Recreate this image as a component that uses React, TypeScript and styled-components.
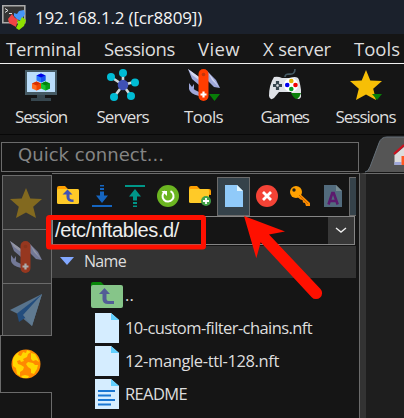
import React from "react";
import styled, { createGlobalStyle } from "styled-components";

const Global = createGlobalStyle`
  *{box-sizing:border-box}
  html,body{margin:0;background:#151515;overflow:hidden}
  svg{display:block;flex:none}
`;
const LINE = "#6b6b6b";

const Window = styled.div`
  position:relative;width:404px;height:418px;overflow:hidden;background:#151515;color:#dedede;
  font-family:"Open Sans","Noto Sans",sans-serif;display:flex;flex-direction:column;
`;
const Label = styled.span<{ $w: number; $size: number }>`
  display:block;flex:none;width:${p => p.$w}px;font-size:${p => p.$size}px;line-height:1.3;white-space:nowrap;
  text-align:left;
`;
/* Stretches or tightens a line of text to a fixed advance width */
function Fit({ w, size, children }: { w: number; size: number; children: string }) {
  const ref = React.useRef<HTMLSpanElement>(null);
  React.useLayoutEffect(() => {
    const el = ref.current!;
    const r = document.createRange();
    r.selectNodeContents(el);
    const natural = r.getBoundingClientRect().width;
    el.style.letterSpacing = `${(w - natural) / children.length}px`;
  }, [w, children]);
  return <Label ref={ref} $w={w} $size={size}>{children}</Label>;
}
const TitleBar = styled.header`
  height:34px;flex:none;background:#1b212c;display:flex;align-items:center;gap:8px;padding:0 0 0 2px;color:#f4f4f4;
`;
const TitleText = styled.div`padding-top:3px;`;
const Menu = styled.nav`
  height:30px;flex:none;border-bottom:1px solid #f0f0f0;display:flex;align-items:center;padding:1px 0 0 6px;gap:23px;
`;
const Toolbar = styled.div`
  height:71px;flex:none;border-bottom:1px solid #080808;display:grid;grid-template-columns:82px 81px 81px 81px 81px;
`;
const Tool = styled.div`display:flex;flex-direction:column;align-items:center;padding-top:5px;gap:5px;`;
const ConnectRow = styled.div`height:38px;flex:none;display:flex;align-items:flex-end;`;
const QuickBox = styled.div`
  width:358px;height:30px;margin:0 0 1px 1px;border:1px solid ${LINE};display:flex;align-items:center;padding:0 0 5px 16px;
  font-family:"DejaVu Sans",sans-serif;color:#858585;
`;
const Main = styled.div`flex:1;min-height:0;display:flex;`;
const SideTabs = styled.aside`width:52px;display:flex;flex-direction:column;padding-top:2px;`;
const SideTab = styled.div<{ $h: number }>`
  height:${p => p.$h}px;margin-left:2px;background:#333;border:1px solid ${LINE};border-bottom:0;
  display:flex;align-items:center;padding-left:7px;
`;
const ActiveTab = styled.div`
  height:58px;flex:none;border:1px solid ${LINE};border-right:0;display:flex;align-items:center;padding-left:9px;
`;
const SideRest = styled.div`flex:1;border-right:1px solid ${LINE};`;
const Panel = styled.section`width:308px;border-top:1px solid ${LINE};border-right:1px solid ${LINE};`;
const FileTools = styled.div`height:42px;display:flex;padding:3px 0 0 0;overflow:hidden;width:304px;`;
const FileTool = styled.div<{ $on?: boolean }>`
  width:33px;height:39px;flex:none;display:flex;align-items:center;justify-content:center;padding-bottom:2px;
  border:1px solid ${p => (p.$on ? LINE : "transparent")};background:${p => (p.$on ? "#35424a" : "transparent")};
`;
const PathBox = styled.div`
  width:303px;height:29px;border:1px solid #858585;display:flex;justify-content:space-between;align-items:center;
  padding-left:2px;font-family:"Liberation Sans",Arial,sans-serif;color:#eee;
`;
const PathText = styled.div`padding-bottom:1px;`;
const Drop = styled.div`width:26px;height:27px;background:#383838;display:flex;align-items:center;justify-content:center;`;
const Head = styled.div`
  margin-top:1px;width:304px;height:32px;background:#333;display:flex;align-items:center;padding:0 0 2px 8px;gap:10px;
`;
const FileRow = styled.div`height:33px;display:flex;align-items:center;padding-left:39px;gap:2px;`;
const FileName = styled.div`padding-top:1px;`;
const IconSlot = styled.div`width:32px;display:flex;justify-content:center;`;
const Terminal = styled.div`flex:1;border-left:6px solid #333;background:#1e1e1e;border-top:1px solid ${LINE};`;
const Overlay = styled.svg`position:absolute;left:0;top:0;pointer-events:none;`;

const STAR = "M16 1l4.3 10.6L32 12l-8.8 7.7L26 31l-10-5.5L6 31l2.8-11.3L0 12l11.7-.4z";

const Knife = ({ muted = false }: { muted?: boolean }) => (
  <svg width="32" height="32" viewBox="0 0 32 32" opacity={muted ? 0.6 : 1}>
    <path d="M0 0l11 8v8L4 10z" fill="#9fa8da" /><path d="M0 0l11 8v3L4 6z" fill="#d5d9ef" />
    <path d="M19 2l9 9 4 8-6-1-7-7z" fill="#9fa8da" /><path d="M20 3l11 15-7-7z" fill="#d5d9ef" />
    <path d="M1 14v6q1 5 10 7v-4l-4-2q-2-1-1-2V15L4 18z" fill="#9fa8da" />
    <rect x="10.5" y="0" width="10" height="32" rx="5" fill={muted ? "#d83a12" : "#ff3d00"} />
    <circle cx="15.5" cy="5.5" r="1.8" fill="#bf360c" />
    <path d="M15.5 22.5v6M12.5 25.5h6" stroke="#fff" strokeWidth="2.2" />
    {!muted && <path d="M21 25h11l-5.5 7z" fill="#087e08" />}
  </svg>
);
const Cube = ({ x, y, c }: { x: number; y: number; c: string[] }) => (
  <g transform={`translate(${x} ${y})`}>
    <path d="M0 2l4.5-2L9 2v5L4.5 9 0 7z" fill={c[0]} /><path d="M4.5 4L9 2v5L4.5 9z" fill={c[1]} />
    <path d="M0 2l4.5-2L9 2 4.5 4z" fill={c[2]} />
  </g>
);
const Monitor = () => (
  <svg width="32" height="32" viewBox="0 0 32 32">
    <path d="M0 1h32v25H0z" fill="#455a64" /><path d="M2 3h28v20H2z" fill="#bbdefb" />
    <path d="M12 26h8v3h6v3H6v-3h6z" fill="#37474f" />
    <Cube x={11.5} y={4.5} c={["#2979ff", "#1553ee", "#0000e6"]} />
    <Cube x={7} y={12.5} c={["#ff6d20", "#ef4500", "#d83000"]} />
    <Cube x={16} y={12.5} c={["#16c62f", "#079817", "#00820b"]} />
  </svg>
);
const Network = () => (
  <svg width="32" height="32" viewBox="0 0 32 32">
    <path d="M16 16V4M16 16L4 8M16 16l11-3M16 16L7 28M16 16l8 11" stroke="#cfd8dc" strokeWidth="2.6" />
    <g fill="#00bcd4"><circle cx="16" cy="4" r="4" /><circle cx="4" cy="8" r="4" /><circle cx="28" cy="13.5" r="4" /><circle cx="7" cy="28" r="4" /><circle cx="24" cy="27" r="4" /></g>
    <circle cx="16" cy="16" r="5.3" fill="#3f51b5" />
  </svg>
);
const Gamepad = () => (
  <svg width="32" height="32" viewBox="0 0 32 32">
    <path d="M16 8q0-3 4-3 6 1 6-5" fill="none" stroke="#455a64" strokeWidth="1.6" />
    <path d="M5 8q4-1 8 1h7q9-3 10 2 3 11 2 17-2 4-6 0l-4-5H10l-5 6q-4 3-5-2Q0 16 5 8z" fill="#dfe2e7" />
    <circle cx="22" cy="16" r="7" fill="#fff" />
    <path d="M8.5 12v9M4 16.5h9" stroke="#37474f" strokeWidth="3.2" /><circle cx="8.5" cy="16.5" r="1.2" fill="#dfe2e7" />
    <circle cx="22.3" cy="12" r="2.3" fill="#e2b000" /><circle cx="18.2" cy="16" r="2.3" fill="#0000ee" /><circle cx="26.5" cy="16" r="2.3" fill="#f00000" /><circle cx="22.3" cy="20" r="2.3" fill="#079b22" />
    <path d="M22 24h10q-1 4-4 6-3 0-6-6z" fill="#087e08" />
  </svg>
);
const Star = ({ muted = false }: { muted?: boolean }) => (
  <svg width="32" height="32" viewBox="0 0 32 32"><path d={STAR} fill={muted ? "#82691f" : "#f7bf06"} />{!muted && <path d="M22 25h10l-5 6z" fill="#087e08" />}</svg>
);
const Plane = () => (
  <svg width="32" height="32" viewBox="0 0 32 32"><path d="M32 0L0 16l7 3.5L22 32z" fill="#58738c" /><path d="M32 0L7 19.5 9 28l6-4z" fill="#234d7d" /><path d="M32 0L13 21l9 11z" fill="#607a90" /></svg>
);
const Globe = () => (
  <svg width="32" height="32" viewBox="1 1 32 32">
    <circle cx="17" cy="17" r="14.5" fill="#ff8900" />
    <path d="M4 12q2-5 6-7l-1 3 3 1 2-4 3 1 1-3 4 2-3 2-1 3-4 2 1 2-3 1-1-2-3 1 1 3 3 1 3 2-1 3-3 2v4l-3-2-1-6-3-2zM22 6l4 1 3 5 1 3-3-2-3 1-2-2zM19 15l5 1 2 2 3 0-1 4-3 5-3-1 0-4-3-2-2-3zM12 29l4-1 4 1-1 2-5 0z" fill="#ffd600" />
  </svg>
);
const TitleIcon = () => (
  <svg width="25" height="26" viewBox="0 0 25 26">
    <path d="M.8 1.8h22v17H.8z" fill="#343434" stroke="#aaa" strokeWidth="1.6" />
    <path d="M3 4.5l3 2-3 2M7 9.5h3" stroke="#ddd" fill="none" />
    <path d="M6 15l4-5 3 4 3 1-1 4-1 4-7-4z" fill="#f04444" />
    <path d="M12 9l3 1 2-3 5-1 1 4-4 7-4-2-3-3z" fill="#4596f7" />
    <path d="M15 16l3 1 2-4 4 3-2 6-5 4-3-2 2-4z" fill="#8ee000" />
  </svg>
);
const Folder = ({ add = false }: { add?: boolean }) => (
  <svg width="23" height="22" viewBox="0 0 23 22">
    <path d="M0 8V3q0-2 2-2h6l3 3h9q2 0 2 2v4z" fill="#ffa000" />
    <rect y="4" width={add ? 20 : 22} height={add ? 14 : 15} rx="1.5" fill="#ffca28" />
    {add ? <><circle cx="17" cy="16" r="5" fill="#43a047" /><path d="M17 13v6M14 16h6" stroke="#fff" strokeWidth="1.8" /></> :
      <path d="M5.5 9.5l5-5 5 5h-3v3q0 2 4 2v2.5q-7 0-7-5V9.5z" fill="#3f51b5" />}
  </svg>
);
const Transfer = ({ up = false }: { up?: boolean }) => (
  <svg width="22" height="24" viewBox="0 0 22 24">
    <g fill={up ? "#009688" : "#1565c0"} transform={up ? "rotate(180 11 12)" : undefined}>
      <path d="M1 21h20v2H1zM9 1h4v1.5H9zM9 4h4v2H9zM9 7.5h4v4h4L11 19l-6-7.5h4z" />
    </g>
  </svg>
);
const Refresh = () => (
  <svg width="22" height="22" viewBox="0 0 22 22"><circle cx="11" cy="11" r="11" fill="#6cb521" /><path d="M13.5 6.2a5.5 5.5 0 1 1-5.3.2" fill="none" stroke="#fff" strokeWidth="2" /><path d="M4.5 6H10v5z" fill="#fff" /></svg>
);
const NewFile = () => <svg width="18" height="22" viewBox="0 0 18 22"><path d="M0 0h12l6 6v16H0z" fill="#90caf9" /><path d="M12 0l6 6h-6z" fill="#e1f5fe" /></svg>;
const Delete = () => <svg width="22" height="22" viewBox="0 0 22 22"><circle cx="11" cy="11" r="11" fill="#f44336" /><path d="M7 7l8 8m0-8l-8 8" stroke="#fff" strokeWidth="2.8" /></svg>;
const Key = () => (
  <svg width="20" height="20" viewBox="0 0 20 20"><path d="M8 6l12 11v3h-4l-1-3-2-.4-.5-2.6-2-.5L6 10z" fill="#fb8c00" /><circle cx="6" cy="6" r="6" fill="#ffa000" /><circle cx="4" cy="4" r="1.7" fill="#242018" /><path d="M9 9l9 9" stroke="#cc6500" strokeWidth="1" /></svg>
);
const FontFile = () => (
  <svg width="18" height="22" viewBox="0 0 18 22"><path d="M0 0h12l6 6v16H0z" fill="#526b7d" /><path d="M12 0l6 6h-6z" fill="#788c92" /><path d="M4.5 19.5L8.3 8h1.4l4 11.5M6 16h6" stroke="#5c1a6d" strokeWidth="2.6" fill="none" /></svg>
);
const Up = () => (
  <svg width="32" height="26" viewBox="0 0 32 26"><path d="M0 7V2q0-2 2-2h8l3 3v5z" fill="#078707" /><rect y="3" width="32" height="23" rx="2" fill="#86c589" /><path d="M8 12l5.5-6 5.5 6h-3.5v5q0 2 2 2H23v3h-6q-5.5 0-5.5-5v-5z" fill="#525c96" /></svg>
);
const Doc = ({ text = false }: { text?: boolean }) => (
  <svg width="24" height="30" viewBox="0 0 24 30"><path d="M0 0h16l8 7v23H0z" fill="#d5edff" /><path d="M16 0l8 7h-8z" fill="#61d0ff" />{text && <path d="M3 12h17M3 16.5h13M3 21h17M3 25.5h13" stroke="#1976d2" strokeWidth="2" />}</svg>
);
const HomeTab = () => (
  <svg width="45" height="37" viewBox="0 0 45 37">
    <path d="M6 36q3 0 5-5L20 7q2-6 8-6h17v35z" fill="#555" /><path d="M6 36q3 0 5-5L20 7q2-6 8-6h17" fill="none" stroke="#66717a" />
    <path d="M35.500 19L45 11v18h-9.500z" fill="#ddd" /><path d="M35.500 26h7v3h-7z" fill="#9fa8da" /><path d="M42.500 20H45v9h-2.500z" fill="#ff5722" /><path d="M35 18L45 9" stroke="#cc111e" strokeWidth="2.2" />
  </svg>
);

const menu: [string, number][] = [["Terminal", 75], ["Sessions", 71], ["View", 42], ["X server", 68], ["Tools", 46]];
const tools: [string, number, React.ReactNode][] = [
  ["Session", 52, <Monitor />], ["Servers", 52, <Network />], ["Tools", 39, <Knife />], ["Games", 48, <Gamepad />], ["Sessions", 60, <Star />],
];
const files: [string, number, React.ReactNode][] = [
  ["..", 9, <Up />], ["10-custom-filter-chains.nft", 187, <Doc />], ["12-mangle-ttl-128.nft", 154, <Doc />], ["README", 62, <Doc text />],
];
const fileTools = [<Folder />, <Transfer />, <Transfer up />, <Refresh />, <Folder add />, <NewFile />, <Delete />, <Key />, <FontFile />];

export default function App() {
  return (
    <Window>
      <Global />
      <TitleBar><TitleIcon /><TitleText><Fit w={167} size={17}>192.168.1.2 ([cr8809])</Fit></TitleText></TitleBar>
      <Menu>{menu.map(([t, w]) => <Fit key={t} w={w} size={18.5}>{t}</Fit>)}</Menu>
      <Toolbar>{tools.map(([t, w, icon]) => <Tool key={t}>{icon}<Fit w={w} size={17}>{t}</Fit></Tool>)}</Toolbar>
      <ConnectRow><QuickBox><Fit w={146} size={18}>Quick connect...</Fit></QuickBox><HomeTab /></ConnectRow>
      <Main>
        <SideTabs>
          <SideTab $h={54}><Star muted /></SideTab>
          <SideTab $h={54}><Knife muted /></SideTab>
          <SideTab $h={52}><Plane /></SideTab>
          <ActiveTab><Globe /></ActiveTab>
          <SideRest />
        </SideTabs>
        <Panel>
          <FileTools>{fileTools.map((icon, i) => <FileTool key={i} $on={i === 5}>{icon}</FileTool>)}<FileTool $on /></FileTools>
          <PathBox><PathText><Fit w={124} size={20}>/etc/nftables.d/</Fit></PathText><Drop><svg width="12" height="7" viewBox="0 0 12 7"><path d="M1 1l5 4 5-4" fill="none" stroke="#eee" strokeWidth="1.4" /></svg></Drop></PathBox>
          <Head><svg width="14" height="8"><path d="M0 0h14L7 8z" fill="#82a8ff" /></svg><Fit w={42} size={16}>Name</Fit></Head>
          {files.map(([name, w, icon]) => <FileRow key={name}><IconSlot>{icon}</IconSlot><FileName><Fit w={w} size={16.5}>{name}</Fit></FileName></FileRow>)}
        </Panel>
        <Terminal />
      </Main>
      <Overlay width="404" height="418">
        <rect x="48.5" y="217.5" width="155" height="29.5" rx="1" fill="none" stroke="#ff1000" strokeWidth="5" />
        <path d="M244 216l41 15.5-16 3 51.5 54.5a6 6 0 0 1-8.8 8.2L260.7 242.3l-4.4 16z" fill="#ff1000" />
      </Overlay>
    </Window>
  );
}
